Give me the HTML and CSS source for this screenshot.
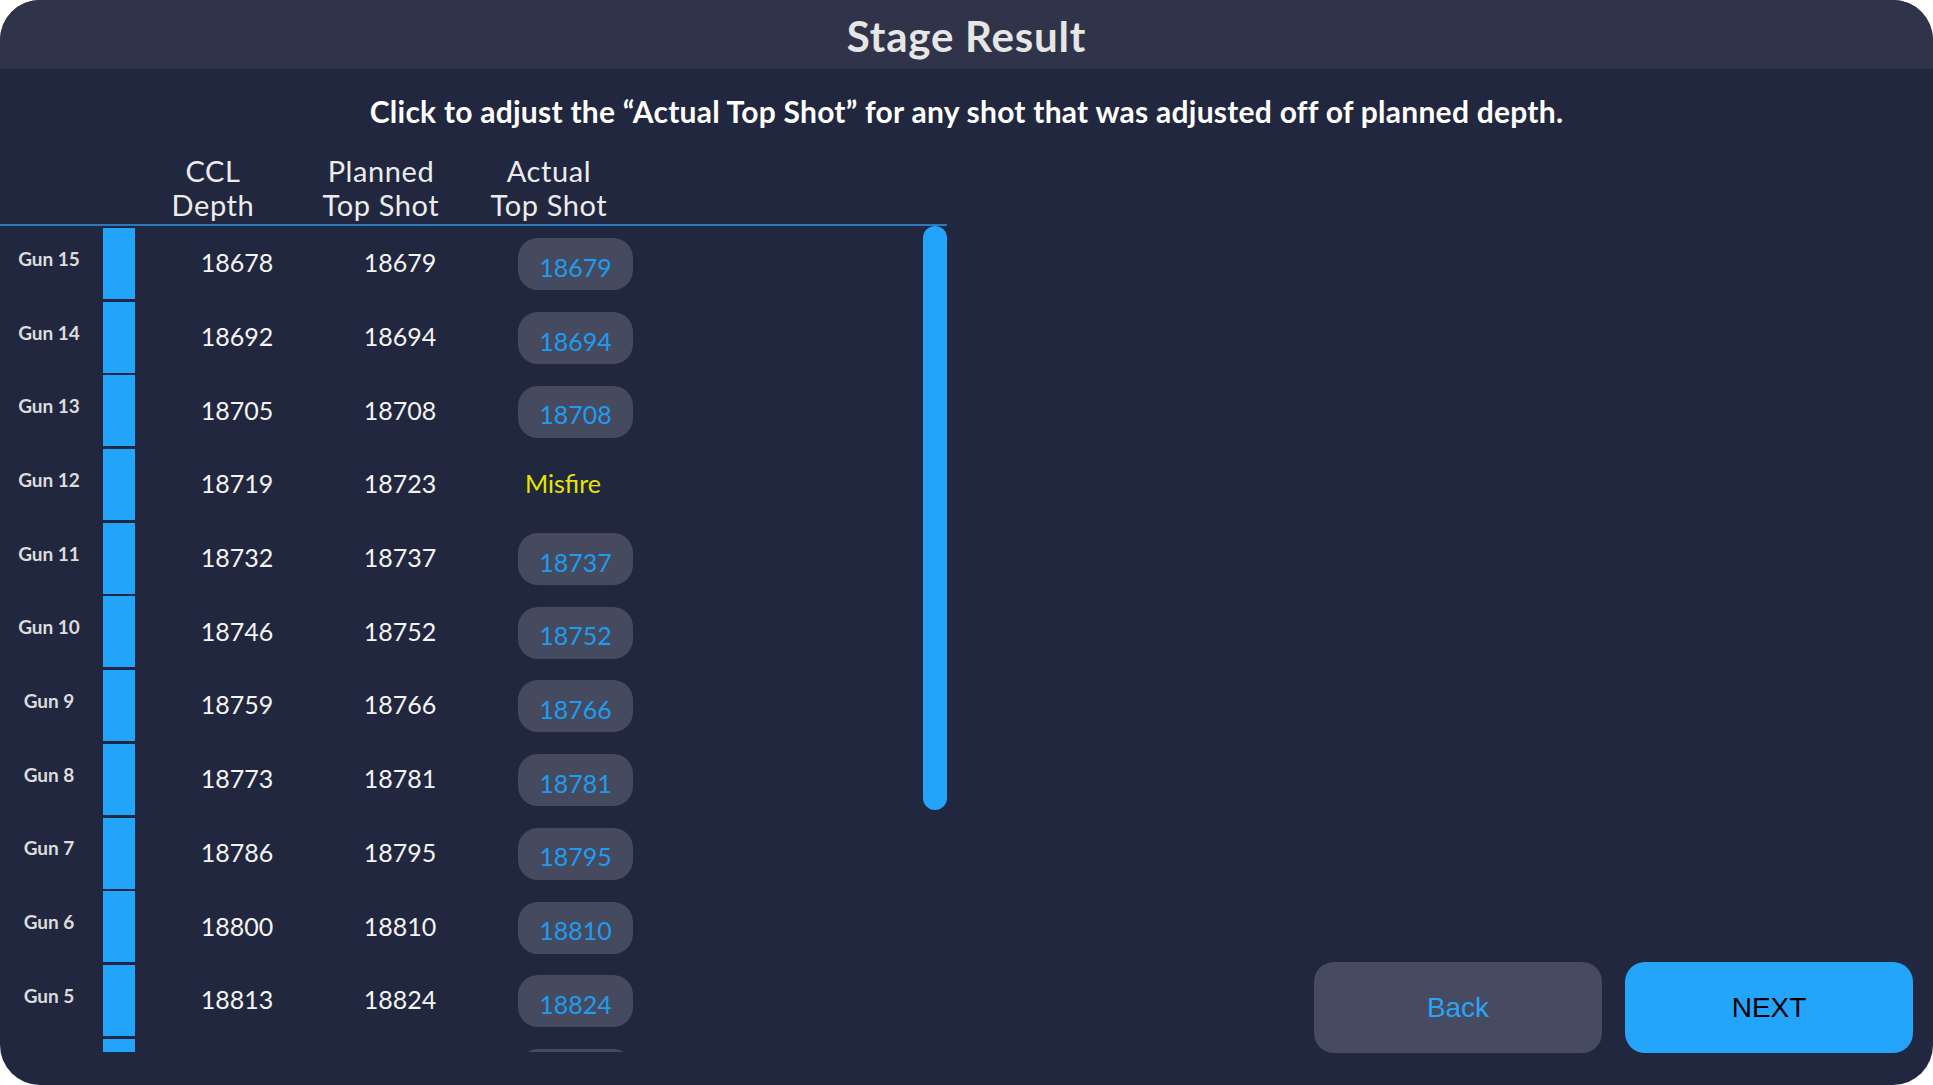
FILE: index.html
```html
<!DOCTYPE html>
<html lang="en">
<head>
<meta charset="utf-8">
<title>Stage Result</title>
<link rel="stylesheet" href="styles.css">
</head>
<body>
<div class="card">
  <header class="header"><h1 class="title">Stage Result</h1></header>
  <p class="instruction">Click to adjust the “Actual Top Shot” for any shot that was adjusted off of planned depth.</p>
  <div class="main">
    <section class="table">
      <div class="thead">
        <div class="th th-ccl">CCL<br>Depth</div>
        <div class="th th-planned">Planned<br>Top Shot</div>
        <div class="th th-actual">Actual<br>Top Shot</div>
      </div>
      <div class="list">
        <div class="rows">
          <div class="row"><span class="gun">Gun 15</span><span class="bar"></span><span class="num ccl">18678</span><span class="num planned">18679</span><span class="actual"><button class="pill">18679</button></span></div>
          <div class="row"><span class="gun">Gun 14</span><span class="bar"></span><span class="num ccl">18692</span><span class="num planned">18694</span><span class="actual"><button class="pill">18694</button></span></div>
          <div class="row"><span class="gun">Gun 13</span><span class="bar"></span><span class="num ccl">18705</span><span class="num planned">18708</span><span class="actual"><button class="pill">18708</button></span></div>
          <div class="row"><span class="gun">Gun 12</span><span class="bar"></span><span class="num ccl">18719</span><span class="num planned">18723</span><span class="actual"><span class="misfire">Misfire</span></span></div>
          <div class="row"><span class="gun">Gun 11</span><span class="bar"></span><span class="num ccl">18732</span><span class="num planned">18737</span><span class="actual"><button class="pill">18737</button></span></div>
          <div class="row"><span class="gun">Gun 10</span><span class="bar"></span><span class="num ccl">18746</span><span class="num planned">18752</span><span class="actual"><button class="pill">18752</button></span></div>
          <div class="row"><span class="gun">Gun 9</span><span class="bar"></span><span class="num ccl">18759</span><span class="num planned">18766</span><span class="actual"><button class="pill">18766</button></span></div>
          <div class="row"><span class="gun">Gun 8</span><span class="bar"></span><span class="num ccl">18773</span><span class="num planned">18781</span><span class="actual"><button class="pill">18781</button></span></div>
          <div class="row"><span class="gun">Gun 7</span><span class="bar"></span><span class="num ccl">18786</span><span class="num planned">18795</span><span class="actual"><button class="pill">18795</button></span></div>
          <div class="row"><span class="gun">Gun 6</span><span class="bar"></span><span class="num ccl">18800</span><span class="num planned">18810</span><span class="actual"><button class="pill">18810</button></span></div>
          <div class="row"><span class="gun">Gun 5</span><span class="bar"></span><span class="num ccl">18813</span><span class="num planned">18824</span><span class="actual"><button class="pill">18824</button></span></div>
          <div class="row row-partial"><span class="gun"></span><span class="bar"></span><span class="num ccl"></span><span class="num planned"></span><span class="actual"><span class="pill pill-partial"></span></span></div>
        </div>
        <div class="scrollbar"></div>
      </div>
    </section>
    <aside class="side">
      <button class="btn btn-back">Back</button>
      <button class="btn btn-next">NEXT</button>
    </aside>
  </div>
</div>
</body>
</html>
```
FILE: styles.css
```css
html, body {
  margin: 0;
  padding: 0;
  background: #ffffff;
}

.card {
  width: 1933px;
  height: 1085px;
  border-radius: 40px;
  overflow: hidden;
  background: #21273f;
  display: flex;
  flex-direction: column;
  font-family: Lato, "Open Sans", sans-serif;
  color: #f2f2f2;
}

.header {
  height: 69px;
  flex: none;
  background: #30344a;
  display: flex;
  align-items: center;
  justify-content: center;
}

.title {
  margin: 0;
  font-size: 42px;
  font-weight: 700;
  letter-spacing: 0.8px;
  color: #e6e6e6;
  line-height: 48px;
  padding-top: 2px;
}

.instruction {
  margin: 24px 0 0;
  text-align: center;
  font-size: 30px;
  line-height: 36px;
  font-weight: 700;
  letter-spacing: 0.25px;
  color: #ffffff;
}

.main {
  flex: 1;
  display: flex;
  min-height: 0;
}

.table {
  width: 947px;
  flex: none;
  display: flex;
  flex-direction: column;
}

.thead {
  display: flex;
  padding: 25px 0 2px 135px;
  border-bottom: 2px solid #2a78c0;
}

.th {
  font-size: 29px;
  line-height: 34px;
  letter-spacing: 0.6px;
  text-align: center;
  color: #ececec;
}

.th-ccl { width: 156px; }
.th-planned { width: 180px; }
.th-actual { width: 156px; }

.list {
  height: 826px;
  display: flex;
  overflow: hidden;
}

.rows {
  width: 923px;
  padding-top: 0.5px;
}

.row {
  height: 73.7px;
  display: flex;
  align-items: center;
}

.gun {
  width: 98px;
  text-align: center;
  font-size: 19px;
  font-weight: 700;
  color: #dcdcdc;
  margin-top: -10px;
}

.bar {
  width: 32px;
  height: 71px;
  margin-left: 5px;
  align-self: flex-start;
  margin-top: 1.5px;
  background: #22a4fb;
}

.num {
  font-size: 25px;
  color: #f4f4f4;
  text-align: center;
  margin-top: -2px;
}

.ccl { width: 204px; }
.planned { width: 122px; }

.actual {
  padding-left: 57px;
  display: flex;
  align-items: center;
}

.pill {
  width: 115px;
  height: 52px;
  border: 0;
  border-radius: 20px;
  background: #464a5e;
  color: #1e9cf0;
  font-family: Lato, "Open Sans", sans-serif;
  font-size: 25px;
  padding: 5px 0 0;
  margin-top: 2px;
}

.pill-partial {
  display: block;
  box-sizing: border-box;
}

.misfire {
  padding-left: 7px;
  font-size: 25px;
  color: #e6e600;
  margin-top: -3px;
}

.scrollbar {
  width: 24px;
  height: 584px;
  border-radius: 12px;
  background: #22a4fb;
  flex: none;
}

.side {
  flex: 1;
  display: flex;
  justify-content: flex-end;
  align-items: flex-end;
  gap: 23px;
  padding: 0 20px 32px 0;
}

.btn {
  width: 288px;
  height: 91px;
  border: 0;
  border-radius: 20px;
  font-family: "Liberation Sans", Arial, sans-serif;
  font-size: 28px;
  padding: 1px 0 0;
}

.btn-back {
  background: #474b61;
  color: #2aa3f5;
}

.btn-next {
  background: #23a5fc;
  color: #000000;
}
```
